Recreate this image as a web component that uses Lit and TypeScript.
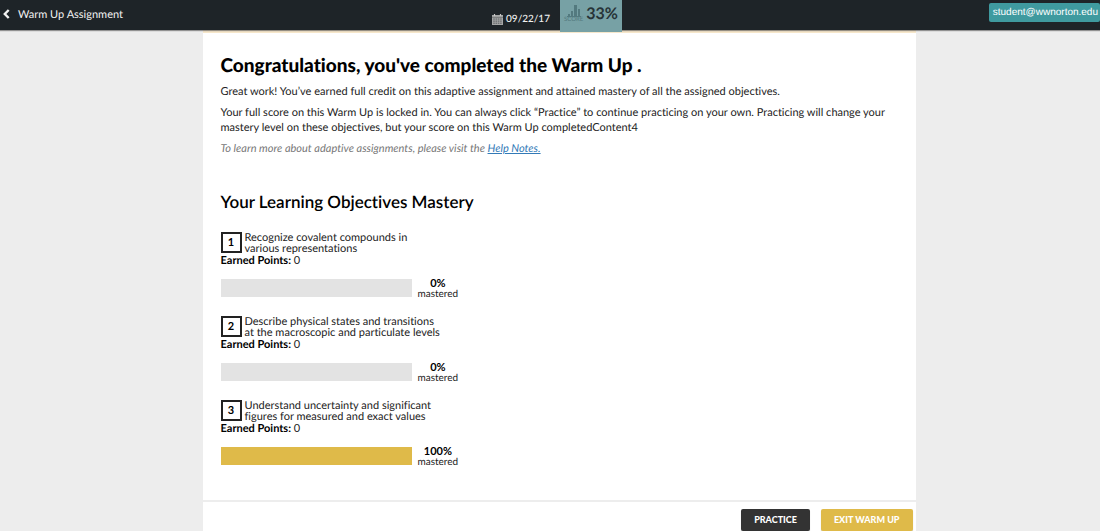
import { LitElement, html, css, svg } from "lit";
import { customElement, property } from "lit/decorators.js";

interface Objective {
  lines: [string, string];
  points: number;
  mastery: number;
}

const OBJECTIVES: Objective[] = [
  { lines: ["Recognize covalent compounds in", "various representations"], points: 0, mastery: 0 },
  { lines: ["Describe physical states and transitions", "at the macroscopic and particulate levels"], points: 0, mastery: 0 },
  { lines: ["Understand uncertainty and significant", "figures for measured and exact values"], points: 0, mastery: 100 },
];

const calendarCells = [0, 1, 2].map((row) =>
  [0, 1, 2, 3].map((col) => svg`<rect x=${1.2 + col * 2.3} y=${4.4 + row * 2.1} width="1.6" height="1.3" fill="#6b6e70" />`)
);

@customElement("top-bar")
class TopBar extends LitElement {
  static styles = css`
    :host {
      display: block;
      position: relative;
      z-index: 1;
    }
    .bar {
      display: grid;
      grid-template-columns: 1fr auto 1fr;
      height: 30px;
      background: #1e2428;
      box-shadow: 0 1px 1px #55555599;
      color: #f2f2f2;
    }
    .back {
      display: flex;
      align-items: center;
      gap: 8px;
      padding-left: 3px;
      height: 28px;
      color: inherit;
      font-size: 11px;
      text-decoration: none;
    }
    .center {
      display: flex;
      align-items: flex-start;
      gap: 10px;
      padding-left: 14px;
    }
    .date {
      display: flex;
      align-items: center;
      gap: 3px;
      padding-top: 12px;
      font-size: 10px;
      line-height: 14px;
      font-weight: 500;
    }
    .date svg,
    .label svg {
      display: block;
    }
    .score {
      display: flex;
      align-items: center;
      justify-content: center;
      gap: 3px;
      width: 62px;
      height: 32px;
      padding-bottom: 5px;
      box-sizing: border-box;
      background: #77a1a5;
      color: #273438;
      font-size: 16px;
      font-weight: 700;
    }
    .label {
      display: flex;
      flex-direction: column;
      align-items: center;
      color: #537a7f;
      font-size: 6px;
      line-height: 6px;
      font-weight: 400;
    }
    .account {
      justify-self: end;
      margin-top: 3px;
      height: 19px;
      padding: 0 2px 0 4px;
      border: 0;
      border-radius: 2px;
      background: #3f9a9f;
      color: #fff;
      font: 10px/19px "Liberation Sans", Arial, sans-serif;
      text-rendering: geometricPrecision;
    }
  `;

  render() {
    return html`
      <header class="bar">
        <a class="back" href="#">
          <svg width="7" height="10" viewBox="0 0 7 10" aria-hidden="true">
            <path d="M5.7 1 1.8 5l3.9 4" fill="none" stroke="currentColor" stroke-width="2.4" />
          </svg>
          Warm Up Assignment
        </a>
        <div class="center">
          <div class="date">
            <svg width="11" height="11" viewBox="0 0 11 11" aria-hidden="true">
              <path d="M0 1h11v10H0z" fill="#a5a6a6" />
              <path d="M0 3.4h11" stroke="#6b6e70" stroke-width=".8" />
              <path d="M2.5 0v2M8.5 0v2" stroke="#c8c8c8" stroke-width="1.2" />
              ${calendarCells}
            </svg>
            <time datetime="2017-09-22">09/22/17</time>
          </div>
          <div class="score">
            <span class="label">
              <svg width="14" height="12" viewBox="0 0 14 12" aria-hidden="true">
                <path d="M1 9h2v3H1zM4 6h2v6H4zM7 0h3v12H7zM11 4h2v8h-2zM0 11h14v1H0z" fill="#537a7f" />
              </svg>
              SCORE
            </span>
            <span>33%</span>
          </div>
        </div>
        <button class="account" type="button">student@wwnorton.edu</button>
      </header>
    `;
  }
}

@customElement("objective-item")
class ObjectiveItem extends LitElement {
  @property({ attribute: false }) objective!: Objective;
  @property({ type: Number }) number = 1;

  static styles = css`
    :host {
      display: block;
      font-size: 11px;
      color: #222;
    }
    .title {
      display: flex;
      gap: 3px;
      line-height: 11px;
    }
    .number {
      display: grid;
      place-items: center;
      width: 21px;
      height: 21px;
      box-sizing: border-box;
      border: 2px solid #222;
      font-weight: 700;
      color: #000;
    }
    .points {
      line-height: 13px;
    }
    b {
      color: #000;
    }
    .progress {
      display: flex;
      align-items: flex-start;
      gap: 6px;
      margin-top: 12px;
    }
    .track {
      width: 191px;
      height: 18px;
      background: #e3e3e3;
    }
    .fill {
      height: 100%;
      background: #dfba49;
    }
    .mastery {
      display: flex;
      flex-direction: column;
      align-items: center;
      line-height: 10px;
    }
    .caption {
      font-size: 10px;
    }
  `;

  render() {
    const { lines, points, mastery } = this.objective;
    return html`
      <div class="title">
        <span class="number">${this.number}</span>
        <span>${lines[0]}<br />${lines[1]}</span>
      </div>
      <div class="points"><b>Earned Points:</b> ${points}</div>
      <div class="progress">
        <div class="track" role="progressbar" aria-label="Mastery" aria-valuenow=${mastery}>
          <div class="fill" style="width:${mastery}%"></div>
        </div>
        <div class="mastery"><b>${mastery}%</b><span class="caption">mastered</span></div>
      </div>
    `;
  }
}

@customElement("app-root")
class AppRoot extends LitElement {
  static styles = css`
    :host {
      display: flex;
      flex-direction: column;
      height: 100vh;
      overflow: hidden;
      background: #ededed;
      font-family: Lato, sans-serif;
      font-variant-ligatures: none;
      text-rendering: geometricPrecision;
      color: #222;
    }
    .page {
      flex: 1;
      display: flex;
      justify-content: center;
      padding-left: 18px;
    }
    main {
      flex: 0 1 713px;
      display: flex;
      flex-direction: column;
      background: #fff;
      border-top: 3px solid #f6e7cb;
      box-sizing: border-box;
    }
    .content {
      padding: 21px 18px 33px;
      font-size: 11px;
      line-height: 15px;
    }
    h1 {
      margin: 0 0 6px;
      font-size: 19px;
      line-height: 24px;
      font-weight: 900;
      color: #000;
    }
    p {
      margin: 0 0 6px;
    }
    .note {
      font-style: italic;
      color: #777;
    }
    .note a {
      color: #337ab7;
    }
    h2 {
      margin: 35px 0 19px;
      font-size: 17px;
      line-height: 22px;
      font-weight: 600;
      color: #000;
    }
    .objectives {
      display: grid;
      gap: 17px;
      margin: 0;
      padding: 0;
      list-style: none;
    }
    footer {
      display: flex;
      justify-content: flex-end;
      gap: 11px;
      padding: 7px 3px;
      border-top: 2px solid #ededed;
    }
    .action {
      height: 22px;
      padding: 0 13px;
      border: 0;
      border-radius: 2px;
      background: #333;
      color: #fff;
      font: 900 9px/22px Lato, sans-serif;
      text-transform: uppercase;
      box-shadow: 0 1px 1px #0003;
    }
    .exit {
      background: #dfba49;
    }
  `;

  render() {
    return html`
      <top-bar></top-bar>
      <div class="page">
        <main>
          <section class="content">
            <h1>Congratulations, you've completed the Warm Up .</h1>
            <p>Great work! You’ve earned full credit on this adaptive assignment and attained mastery of all the assigned objectives.</p>
            <p>
              Your full score on this Warm Up is locked in. You can always click “Practice” to continue practicing on your own.
              Practicing will change your mastery level on these objectives, but your score on this Warm Up completedContent4
            </p>
            <p class="note">To learn more about adaptive assignments, please visit the <a href="#">Help Notes.</a></p>
            <h2>Your Learning Objectives Mastery</h2>
            <ol class="objectives">
              ${OBJECTIVES.map(
                (item, i) => html`<li><objective-item .objective=${item} .number=${i + 1}></objective-item></li>`
              )}
            </ol>
          </section>
          <footer>
            <button class="action" type="button">Practice</button>
            <button class="action exit" type="button">Exit Warm Up</button>
          </footer>
        </main>
      </div>
    `;
  }
}
